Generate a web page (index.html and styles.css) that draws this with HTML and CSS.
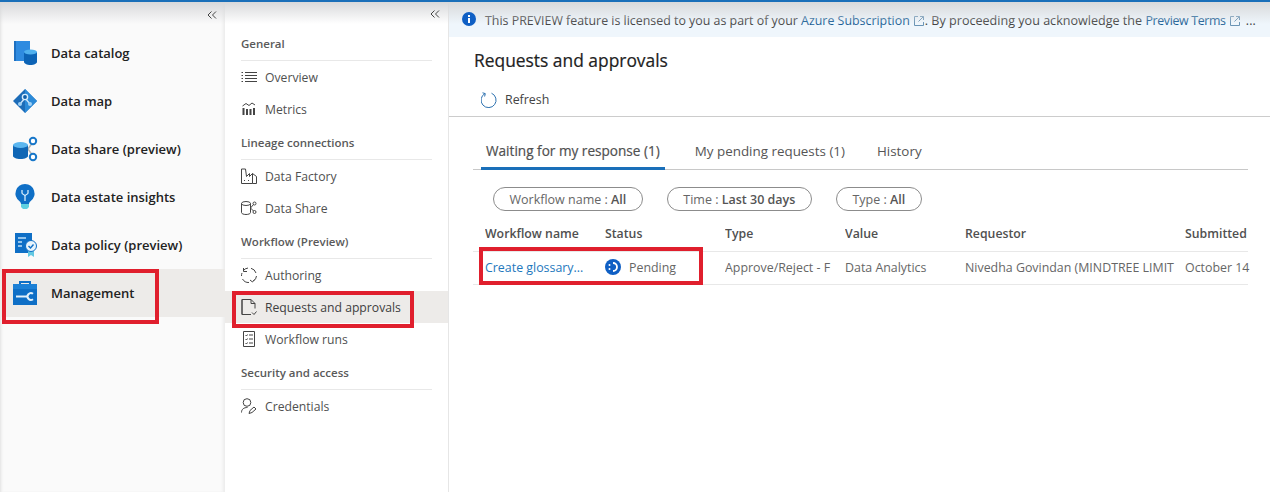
FILE: index.html
```html
<!DOCTYPE html>
<html lang="en">
<head>
<meta charset="utf-8">
<title>Requests and approvals</title>
<link rel="stylesheet" href="styles.css">
</head>
<body>
<div class="app">
  <nav class="rail">
    <div class="collapse"><svg width="10" height="8" viewBox="0 0 10 8"><path d="M4.500 .5 1 4l3.500 3.500M9 .5 5.500 4 9 7.500"/></svg></div>
    <a class="rail-item"><svg class="rail-icon" viewBox="0 0 26 26"><rect x="2" y="1" width="16" height="20" fill="#2f8be0"/><rect x="2" y="1" width="2" height="20" fill="#1d6fc0"/><path d="M12 12v10c0 1.500 2.800 3 6.500 3s6.500-1.500 6.500-3V12z" fill="#0c63b5"/><ellipse cx="18.500" cy="12" rx="6.500" ry="2.600" fill="#4fb0ee"/></svg><span>Data catalog</span></a>
    <a class="rail-item"><svg class="rail-icon" viewBox="0 0 26 26"><path d="M13 1 25 13 13 25 1 13z" fill="#1c6cb8"/><path d="M13 1 25 13 13 25z" fill="#2b8ad8"/><path d="M13 10 8 16M13 10l5 6" stroke="#cfe6fa" stroke-width="1.300" fill="none"/><circle cx="13" cy="9" r="2.600" fill="#0f5ea8" stroke="#d7ecfc" stroke-width="1.400"/><circle cx="8" cy="16" r="2" fill="#9fd0f5"/><circle cx="18" cy="16" r="2" fill="#9fd0f5"/></svg><span>Data map</span></a>
    <a class="rail-item"><svg class="rail-icon" viewBox="0 0 26 26"><path d="M16 13 21 6M16 13l5 7" stroke="#b4b4b4" stroke-width="1.500" fill="none"/><path d="M1 9v11c0 1.500 3 3 7.500 3s7.500-1.500 7.500-3V9z" fill="#0f66b5"/><ellipse cx="8.500" cy="9" rx="7.500" ry="3" fill="#5bb6ef"/><circle cx="21" cy="5" r="3.200" fill="#fff" stroke="#1877c9" stroke-width="2"/><circle cx="21" cy="21" r="3.200" fill="#fff" stroke="#1877c9" stroke-width="2"/></svg><span>Data share (preview)</span></a>
    <a class="rail-item"><svg class="rail-icon" viewBox="0 0 26 26"><path d="M13 0a9.500 9.500 0 0 0-5.500 17.200c.800.700 1.500 1.800 1.500 2.800h8c0-1 .700-2.100 1.500-2.800A9.500 9.500 0 0 0 13 0z" fill="#0f6fc6"/><path d="M9 20h8v3l-2 2h-4l-2-2z" fill="#5fd0e0"/><path d="M10 6v3c0 1.500 3 1.500 3 3v5M16 6v3c0 1.500-3 1.500-3 3" stroke="#d5ecfb" stroke-width="1.300" fill="none"/></svg><span>Data estate insights</span></a>
    <a class="rail-item"><svg class="rail-icon" viewBox="0 0 26 26"><rect x="3" y="1" width="17" height="20" fill="#0f6fc6"/><path d="M6 6h8M6 10h4M6 14h4" stroke="#bfe0f7" stroke-width="1.400"/><path d="M16 19v6l3-2 3 2v-6z" fill="#62c8e2"/><circle cx="19" cy="14" r="5.500" fill="#e8f4fc" stroke="#0f6fc6" stroke-width="1"/><path d="M16.500 14l2 2 3-3.500" stroke="#0f6fc6" stroke-width="1.400" fill="none"/></svg><span>Data policy (preview)</span></a>
    <a class="rail-item active"><svg class="rail-icon" viewBox="0 0 26 26"><path d="M8 5V2h10v3" fill="none" stroke="#0f6fc6" stroke-width="2"/><rect x="1" y="4" width="24" height="21" fill="#0f6fc6"/><rect x="1" y="4" width="24" height="5" fill="#1c80d6"/><path d="M4 16.500h11" stroke="#e3f1fb" stroke-width="2"/><path d="M21 13.800a3.400 3.400 0 1 0 0 5.400" fill="none" stroke="#e3f1fb" stroke-width="2"/></svg><span>Management</span><i class="mark mark-mgmt"></i></a>
  </nav>

  <nav class="subnav">
    <div class="collapse sub-collapse"><svg width="10" height="8" viewBox="0 0 10 8"><path d="M4.500 .5 1 4l3.500 3.500M9 .5 5.500 4 9 7.500"/></svg></div>
    <h3 class="section">General</h3>
    <a class="sub-item"><svg class="sub-icon" viewBox="0 0 16 16"><path d="M4 3.500h12M4 6.500h12M4 9.500h12M4 12.500h12M.5 3.500h1.500M.5 6.500h1.500M.5 9.500h1.500M.5 12.500h1.500"/></svg><span>Overview</span></a>
    <a class="sub-item"><svg class="sub-icon" viewBox="0 0 16 16"><path d="M2.500 7v7M6 8v6M9.500 8v6M13 7v7" stroke-width="2"/><path d="M1.500 5 5 2.500l3 2L11 2l3 2"/></svg><span>Metrics</span></a>
    <h3 class="section">Lineage connections</h3>
    <a class="sub-item"><svg class="sub-icon" viewBox="0 0 16 16"><path d="M.5 15.500V1h4l1 7.500 3-3v3l3-3V15.500zM11.500 5.500l4 3v7h-4" /><path d="M3 12.500h1M7 12.500h1M11 12.500h1" stroke-dasharray="1 1"/></svg><span>Data Factory</span></a>
    <a class="sub-item"><svg class="sub-icon" viewBox="0 0 16 16"><path d="M.5 3.500v9c0 1.200 2 2 4.500 2s4.500-.800 4.500-2v-9"/><ellipse cx="5" cy="3.500" rx="4.500" ry="2"/><circle cx="13.500" cy="3.500" r="1.500"/><circle cx="13.500" cy="12" r="1.500"/><path d="M9.500 8l3-3.500M9.500 8l3 3"/></svg><span>Data Share</span></a>
    <h3 class="section">Workflow (Preview)</h3>
    <a class="sub-item"><svg class="sub-icon" viewBox="0 0 16 16"><path d="M2 4A7 7 0 0 1 7 1M10 1.300a7 7 0 0 1 5 4.700M15.500 9a7 7 0 0 1-3 5M8 15.500A7 7 0 0 1 1.500 12M.5 9a7 7 0 0 1 .5-3M2.500 1v3.500H6M9 13l2.500 2 2-2.500"/></svg><span>Authoring</span></a>
    <a class="sub-item active"><svg class="sub-icon" viewBox="0 0 16 16"><path d="M10 .5H1v15h9M10 .5l4 4v5M1 .5v15M10 .5v4h4M11 13.500l2 2 2.500-3"/></svg><span>Requests and approvals</span><i class="mark mark-req"></i></a>
    <a class="sub-item"><svg class="sub-icon" viewBox="0 0 16 16"><path d="M2.500 .5h11v15h-11zM8 4h4M8 8h4M8 12h4M4.500 4l1 1 1-1.500M4.500 8l1 1 1-1.500M4.500 12l1 1 1-1.500"/></svg><span>Workflow runs</span></a>
    <h3 class="section">Security and access</h3>
    <a class="sub-item"><svg class="sub-icon" viewBox="0 0 16 16"><circle cx="6" cy="4.500" r="3.800"/><path d="M.5 14.500C.5 11 3 9.500 6.500 9.500M8 15.500l1-3 4-3.500 2 2-4 3.500z"/></svg><span>Credentials</span></a>
  </nav>

  <main class="main">
    <div class="banner">
      <svg class="info" viewBox="0 0 14 14"><circle cx="7" cy="7" r="7" fill="#0f5fc4"/><rect x="6" y="6" width="2" height="5" fill="#fff"/><rect x="6" y="3" width="2" height="2" fill="#fff"/></svg>
      <p>This PREVIEW feature is licensed to you as part of your <a>Azure Subscription</a><svg class="ext" viewBox="0 0 10 10"><path d="M4 .500H.5v9h9V6M6 .500h3.500V4M9.500 .500l-5 5"/></svg><span class="tail">. By proceeding you acknowledge the </span><a class="terms">Preview Terms</a><svg class="ext ext-last" viewBox="0 0 10 10"><path d="M4 .500H.5v9h9V6M6 .500h3.500V4M9.500 .500l-5 5"/></svg> ...</p>
    </div>
    <h1 class="title">Requests and approvals</h1>
    <div class="toolbar"><svg class="refresh" viewBox="0 0 16 16"><path d="M4 1.500a7.500 7.500 0 1 0 6.500-.300M1.500 .8 4.300 1.600 3.600 4.500"/></svg><span>Refresh</span></div>
    <div class="content">
      <div class="tabs">
        <a class="tab selected">Waiting for my response (1)</a>
        <a class="tab">My pending requests (1)</a>
        <a class="tab">History</a>
      </div>
      <div class="filters">
        <span class="pill">Workflow name : <b>All</b></span>
        <span class="pill">Time : <b>Last 30 days</b></span>
        <span class="pill">Type : <b>All</b></span>
      </div>
      <div class="grid head">
        <div>Workflow name</div><div>Status</div><div>Type</div><div>Value</div><div>Requestor</div><div>Submitted</div>
      </div>
      <div class="grid row">
        <div><a class="link">Create glossary...</a></div>
        <div class="status"><svg class="pending" viewBox="0 0 16 16"><circle cx="8" cy="8" r="8" fill="#0f5fc4"/><path d="M8 4a4 4 0 0 1 0 8" fill="none" stroke="#fff" stroke-width="1.800"/><circle cx="4.500" cy="6" r="1" fill="#fff"/><circle cx="4.500" cy="10" r="1" fill="#fff"/></svg>Pending</div>
        <div>Approve/Reject - F</div><div>Data Analytics</div><div>Nivedha Govindan (MINDTREE LIMIT</div><div>October 14</div>
        <i class="mark mark-row"></i>
      </div>
    </div>
  </main>
  <div class="shade"></div>
</div>
</body>
</html>
```
FILE: styles.css
```css
* { box-sizing: border-box; }
html, body { margin: 0; padding: 0; background: #fff; }
body { font-family: "Open Sans", "Noto Sans", sans-serif; font-size: 12.4px; color: #505050; }
a { text-decoration: none; color: inherit; }

.app { position: relative; display: flex; width: 1270px; height: 492px; overflow: hidden; border-top: 2px solid #1a6fb9; }
.shade { position: absolute; left: 0; top: 0; width: 100%; height: 22px; background: linear-gradient(#d8d9db, rgba(255,255,255,0)); pointer-events: none; }

.rail { flex: 0 0 225px; background: #fafafa; box-shadow: inset -3px 0 3px -1px #ececec, inset 3px 0 3px -2px #e0e0e0; }
.collapse { display: flex; justify-content: flex-end; height: 27px; padding: 9px 8px 0 0; }
.collapse svg { fill: none; stroke: #444; stroke-width: 1; position: relative; z-index: 1; }
.rail-item { position: relative; display: flex; align-items: center; gap: 13px; height: 48px; padding-left: 12px; padding-right: 3px; font-weight: 600; font-size: 13px; color: #222; }
.rail-icon { flex: 0 0 26px; width: 26px; height: 26px; }
.rail-item.active { background: #edebe9; }

.subnav { flex: 0 0 224px; background: #fff; border-right: 1px solid #e6e6e6; position: relative; padding: 0 16px; }
.sub-collapse { height: 25px; padding: 8px 0 0 0; margin-right: -8px; }
.section { margin: 9px 0 0; height: 26px; line-height: 17px; border-bottom: 1px solid #e8e8e8; font-size: 11.5px; font-weight: 600; color: #5a5a5a; }
.subnav > .sub-collapse + .section { margin-top: 8px; }
.sub-item { position: relative; display: flex; align-items: center; gap: 8px; height: 32px; margin: 0 -16px; padding-left: 16px; font-size: 12.2px; color: #505050; }
.sub-icon { flex: 0 0 16px; width: 16px; height: 16px; fill: none; stroke: #444; stroke-width: 1; }
.sub-item.active { background: #edebe9; color: #404040; }

.mark { position: absolute; border: 4px solid #e01f2d; pointer-events: none; display: block; }
.mark-mgmt { left: 2px; top: 0; width: 157px; height: 55px; }
.mark-req { left: 7px; top: 0; width: 182px; height: 37px; }
.mark-row { left: 6px; top: -5px; width: 224px; height: 38px; }

.main { flex: 1; min-width: 0; }
.banner { display: flex; align-items: center; gap: 9px; height: 35px; padding-left: 13px; background: #eff6fc; white-space: nowrap; }
.banner p { margin: 2px 0 0; color: #444; }
.banner a { color: #1a5f96; }
.tail { font-size: 12.58px; }
.banner .terms { letter-spacing: -.35px; }
.info { width: 14px; height: 14px; flex: none; margin-top: -2px; position: relative; z-index: 1; }
.ext { width: 10px; height: 10px; margin: 0 1px 0 4px; fill: none; stroke: #6a94b5; stroke-width: 1; vertical-align: -1px; }
.ext-last { margin-right: 3px; }

.title { margin: 0; padding: 10px 0 0 25px; height: 41px; font-size: 17.4px; font-weight: 400; line-height: 26px; color: #222; -webkit-text-stroke: .2px #222; }
.toolbar { display: flex; align-items: center; gap: 8px; height: 39px; padding: 5px 0 0 32px; border-bottom: 1px solid #ccc; color: #444; }
.refresh { width: 16px; height: 16px; fill: none; stroke: #2e72b0; stroke-width: 1; }

.content { padding: 19px 22px 0 24px; }
.tabs { display: flex; height: 34px; border-bottom: 1px solid #c8c8c8; padding-left: 8px; gap: 30px; font-size: 13.4px; }
.tab { padding-top: 4px; height: 33px; line-height: 22px; color: #555; }
.tab:nth-child(2) { padding-right: 2px; }
.tab.selected { font-size: 13.6px; font-weight: 500; border-bottom: 3px solid #1a6fb9; height: 34px; color: #505050; padding: 4px 5px 0; -webkit-text-stroke: .2px #505050; }

.filters { display: flex; gap: 24px; padding: 17px 0 0 20px; }
.pill { display: inline-flex; align-items: center; height: 24px; padding: 0 15.500px; border: 1px solid #8c8c8c; border-radius: 12px; font-size: 12.5px; color: #666; white-space: pre; }
.pill b { font-weight: 600; color: #555; }

.grid { position: relative; display: grid; grid-template-columns: 120px 120px 120px 120px 220px 75px; white-space: nowrap; padding-left: 12px; }
.grid > div { overflow: hidden; }
.head { height: 41px; align-items: end; padding-bottom: 9px; border-bottom: 1px solid #e8e8e8; font-size: 12.300px; font-weight: 600; color: #505050; }
.row { height: 33px; align-items: center; padding-bottom: 2px; border-bottom: 1px solid #e8e8e8; color: #666; }
.link { color: #1e78bd; }
.status { display: flex; align-items: center; gap: 8px; }
.pending { width: 16px; height: 16px; flex: none; }
```
